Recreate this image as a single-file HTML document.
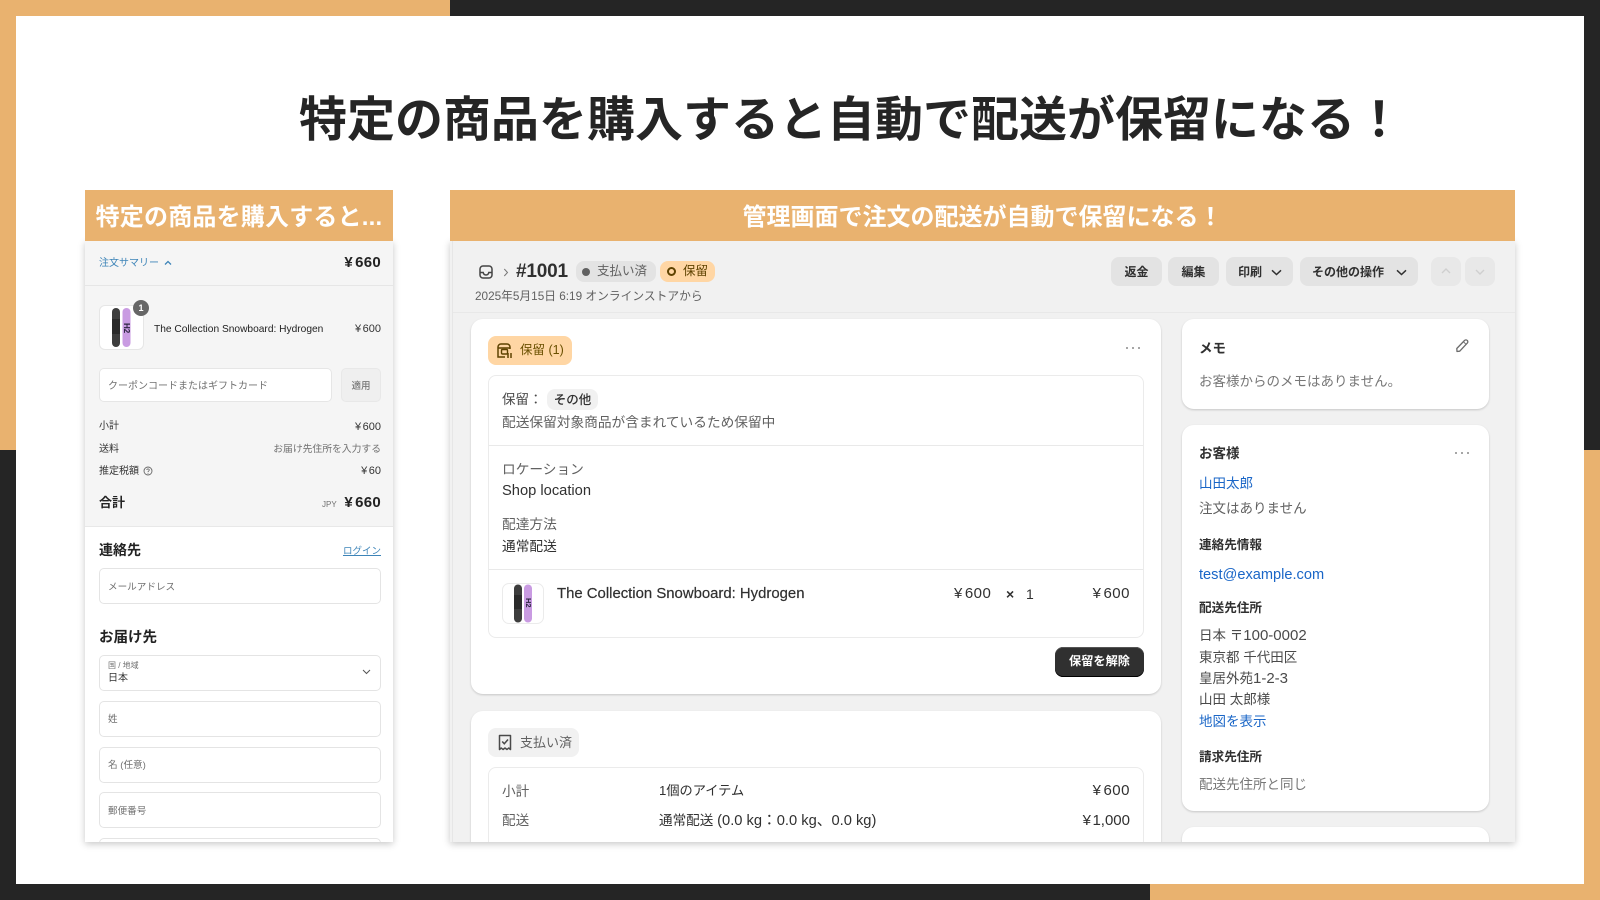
<!DOCTYPE html>
<html lang="ja"><head><meta charset="utf-8"><title>配送保留</title>
<style>
*{box-sizing:border-box;margin:0;padding:0}
html,body{width:1600px;height:900px;overflow:hidden;background:#fff}
body{position:relative;font-family:"Liberation Sans","Noto Sans CJK JP",sans-serif;color:#303030}
.a{position:absolute}
.t{position:absolute;white-space:nowrap;height:20px;line-height:20px;margin-top:1px}
.r{position:absolute;white-space:nowrap;height:20px;line-height:20px;text-align:right;margin-top:1px}
.b{font-weight:700}
.panel{position:absolute;overflow:hidden;box-shadow:0 2px 7px rgba(0,0,0,.22)}
.in{position:absolute;width:1600px;height:900px;filter:blur(.3px)}
.c{font-size:10px;color:#333}
.g{color:#707070}
.field{position:absolute;left:99px;width:282px;background:#fff;border:1px solid #e4e4e4;border-radius:5px}
.card{position:absolute;background:#fff;border-radius:12px;box-shadow:0 1px 2px rgba(0,0,0,.18)}
.box{position:absolute;background:#fff;border:1px solid #ebebeb;border-radius:8px}
.btn{position:absolute;top:257px;height:29px;background:#e3e3e3;border-radius:8px;font-size:12px;font-weight:700;color:#303030;line-height:31px;text-align:center;white-space:nowrap}
.m{font-size:13.5px;color:#303030}
.l{background:#e9e9e9;height:1px;position:absolute}
.lk{color:#1a66c7}
.y{margin-right:1.5px}
.y3{margin-right:2px}
.p{font-size:15px;letter-spacing:.5px}
.n{font-size:15px}
svg{position:absolute;overflow:visible}
</style></head><body>

<!-- frame -->
<div class="a" style="left:0;top:0;width:450px;height:16px;background:#e9b26f"></div>
<div class="a" style="left:450px;top:0;width:1150px;height:16px;background:#252525"></div>
<div class="a" style="left:0;top:0;width:16px;height:450px;background:#e9b26f"></div>
<div class="a" style="left:0;top:450px;width:16px;height:450px;background:#252525"></div>
<div class="a" style="left:1584px;top:0;width:16px;height:450px;background:#252525"></div>
<div class="a" style="left:1584px;top:450px;width:16px;height:450px;background:#e9b26f"></div>
<div class="a" style="left:0;top:884px;width:1150px;height:16px;background:#252525"></div>
<div class="a" style="left:1150px;top:884px;width:450px;height:16px;background:#e9b26f"></div>

<div class="a b" style="left:299px;top:86px;height:70px;line-height:70px;font-size:48px;color:#252525;white-space:nowrap">特定の商品を購入すると自動で配送が保留になる！</div>

<!-- checkout panel -->
<div class="panel" style="left:85px;top:241px;width:308px;height:601px;background:#fff">
<div class="in" style="left:-85px;top:-241px">
  <div class="a" style="left:85px;top:241px;width:308px;height:285px;background:#f5f5f5"></div>
  <div class="a" style="left:85px;top:285px;width:308px;height:1px;background:#e6e6e6"></div>
  <div class="a" style="left:85px;top:526px;width:308px;height:1px;background:#e8e8e8"></div>

  <div class="t" style="left:99px;top:253px;font-size:10px;color:#3d84b8">注文サマリー</div>
  <svg style="left:164px;top:260px" width="8" height="6" viewBox="0 0 8 6"><path d="M1 4.5L4 1.5L7 4.5" fill="none" stroke="#3d84b8" stroke-width="1.3"/></svg>
  <div class="r b" style="right:1219px;top:252px;font-size:15px;letter-spacing:.3px;color:#222"><span class="y3">¥</span>660</div>

  <div class="a" style="left:99px;top:305px;width:45px;height:45px;background:#fff;border:1px solid #e6e6e6;border-radius:6px"></div>
  <svg style="left:99px;top:305px" width="45" height="45" viewBox="0 0 45 45">
    <rect x="13" y="3" width="8" height="39" rx="4" fill="#3d3d3d"/>
    <rect x="13" y="14" width="8" height="15" fill="#2a2a2a"/>
    <rect x="23.5" y="3" width="8" height="39" rx="4" fill="#c99be2"/>
    <text x="0" y="0" transform="translate(25 18) rotate(90)" font-size="8" font-weight="700" fill="#2b2440" font-family="Liberation Sans">H2</text>
  </svg>
  <div class="a" style="left:133px;top:300px;width:16px;height:16px;border-radius:50%;background:#666;color:#fff;font-size:9px;font-weight:700;line-height:16px;text-align:center">1</div>
  <div class="t" style="left:154px;top:319px;font-size:10.2px;color:#222">The Collection Snowboard: Hydrogen</div>
  <div class="r" style="right:1219px;top:318px;font-size:11px;color:#333"><span class="y">¥</span>600</div>

  <div class="a" style="left:99px;top:368px;width:233px;height:34px;background:#fff;border:1px solid #e6e6e6;border-radius:5px"></div>
  <div class="t g" style="left:108px;top:376px;font-size:10px">クーポンコードまたはギフトカード</div>
  <div class="a" style="left:341px;top:368px;width:40px;height:34px;background:#efefef;border:1px solid #e8e8e8;border-radius:5px;font-size:9.5px;font-weight:500;color:#777;line-height:36px;text-align:center">適用</div>

  <div class="t c" style="left:99px;top:416px">小計</div>
  <div class="r c" style="right:1219px;top:416px;font-size:11px"><span class="y">¥</span>600</div>
  <div class="t c" style="left:99px;top:439px">送料</div>
  <div class="r g" style="right:1219px;top:439px;font-size:9.8px">お届け先住所を入力する</div>
  <div class="t c" style="left:99px;top:461px">推定税額</div>
  <svg style="left:143px;top:466px" width="10" height="10" viewBox="0 0 10 10"><circle cx="5" cy="5" r="4" fill="none" stroke="#666" stroke-width=".9"/><path d="M3.8 4C3.8 2.6 6.3 2.6 6.3 4C6.3 5 5 5 5 6" fill="none" stroke="#666" stroke-width=".8"/><circle cx="5" cy="7.3" r=".5" fill="#666"/></svg>
  <div class="r c" style="right:1219px;top:460px;font-size:11px"><span class="y">¥</span>60</div>
  <div class="t b" style="left:99px;top:492px;font-size:13px;color:#222">合計</div>
  <div class="t g" style="left:322px;top:494px;font-size:8px">JPY</div>
  <div class="r b" style="right:1219px;top:492px;font-size:15px;letter-spacing:.3px;color:#222"><span class="y3">¥</span>660</div>

  <div class="t b" style="left:99px;top:539px;font-size:14px;color:#222">連絡先</div>
  <div class="r" style="right:1219px;top:541px;font-size:9.5px;color:#3d84b8;text-decoration:underline">ログイン</div>
  <div class="field" style="top:568px;height:36px"></div>
  <div class="t g" style="left:108px;top:577px;font-size:9.6px">メールアドレス</div>

  <div class="t b" style="left:99px;top:627px;font-size:14.5px;color:#222">お届け先</div>
  <div class="field" style="top:655px;height:36px"></div>
  <div class="t g" style="left:108px;top:655px;font-size:8px">国 / 地域</div>
  <div class="t c" style="left:108px;top:668px">日本</div>
  <svg style="left:362px;top:669px" width="9" height="6" viewBox="0 0 9 6"><path d="M1 1L4.5 4.5L8 1" fill="none" stroke="#555" stroke-width="1"/></svg>
  <div class="field" style="top:701px;height:36px"></div>
  <div class="t g" style="left:108px;top:709px;font-size:9.6px">姓</div>
  <div class="field" style="top:747px;height:36px"></div>
  <div class="t g" style="left:108px;top:755px;font-size:9.6px">名 (任意)</div>
  <div class="field" style="top:792px;height:36px"></div>
  <div class="t g" style="left:108px;top:801px;font-size:9.6px">郵便番号</div>
  <div class="field" style="top:838px;height:20px"></div>
</div></div>
<div class="a" style="left:85px;top:190px;width:308px;height:51px;background:#e9b26f;color:#fff;font-size:24px;font-weight:700;line-height:55px;text-align:center;letter-spacing:.2px;white-space:nowrap">特定の商品を購入すると...</div>

<!-- admin panel -->
<div class="panel" style="left:450px;top:241px;width:1065px;height:601px;background:#f1f1f1">
<div class="in" style="left:-450px;top:-241px">
  <div class="a" style="left:452px;top:241px;width:1px;height:601px;background:#e6e6e6"></div>
  <div class="a" style="left:453px;top:312px;width:1062px;height:1px;background:#e8e8e8"></div>

  <svg style="left:479px;top:265px" width="14" height="14" viewBox="0 0 14 14"><rect x="1" y="1" width="12" height="12" rx="3" fill="none" stroke="#444" stroke-width="1.5"/><path d="M1 7.5H4.2C4.6 9.3 5.6 10 7 10C8.4 10 9.4 9.3 9.8 7.5H13" fill="none" stroke="#444" stroke-width="1.5"/></svg>
  <svg style="left:503px;top:268px" width="6" height="9" viewBox="0 0 6 9"><path d="M1.3 1L4.5 4.5L1.3 8" fill="none" stroke="#777" stroke-width="1"/></svg>
  <div class="t b" style="left:516px;top:261px;font-size:19px;letter-spacing:-.2px;color:#303030">#1001</div>
  <div class="a" style="left:576px;top:261px;width:80px;height:21px;background:#e3e3e3;border-radius:8px"></div>
  <div class="a" style="left:582px;top:268px;width:8px;height:8px;border-radius:50%;background:#616161"></div>
  <div class="t" style="left:597px;top:260px;font-size:12.5px;color:#616161">支払い済</div>
  <div class="a" style="left:660px;top:261px;width:55px;height:21px;background:#ffd6a4;border-radius:8px"></div>
  <div class="a" style="left:667px;top:267px;width:9px;height:9px;border-radius:50%;border:2px solid #5e4200"></div>
  <div class="t" style="left:683px;top:260px;font-size:12.5px;color:#5e4200">保留</div>
  <div class="t" style="left:475px;top:286px;font-size:11.75px;color:#616161">2025年5月15日 6:19 オンラインストアから</div>

  <div class="btn" style="left:1111px;width:51px">返金</div>
  <div class="btn" style="left:1168px;width:51px">編集</div>
  <div class="btn" style="left:1226px;width:67px;text-align:left;padding-left:12px">印刷</div>
  <svg style="left:1271px;top:269px" width="11" height="7" viewBox="0 0 11 7"><path d="M1 1.3L5.5 5.5L10 1.3" fill="none" stroke="#303030" stroke-width="1.5"/></svg>
  <div class="btn" style="left:1300px;width:118px;text-align:left;padding-left:12px">その他の操作</div>
  <svg style="left:1396px;top:269px" width="11" height="7" viewBox="0 0 11 7"><path d="M1 1.3L5.5 5.5L10 1.3" fill="none" stroke="#303030" stroke-width="1.5"/></svg>
  <div class="btn" style="left:1431px;width:30px;background:#e8e8e8"></div>
  <svg style="left:1441px;top:268px" width="10" height="6" viewBox="0 0 10 6"><path d="M1 5L5 1L9 5" fill="none" stroke="#cfcfcf" stroke-width="1.4"/></svg>
  <div class="btn" style="left:1465px;width:30px;background:#e8e8e8"></div>
  <svg style="left:1475px;top:269px" width="10" height="6" viewBox="0 0 10 6"><path d="M1 1L5 5L9 1" fill="none" stroke="#cfcfcf" stroke-width="1.4"/></svg>

  <!-- hold card -->
  <div class="card" style="left:471px;top:319px;width:690px;height:375px"></div>
  <div class="a" style="left:488px;top:336px;width:84px;height:29px;background:#ffd6a4;border-radius:8px"></div>
  <svg style="left:497px;top:342px" width="16" height="17" viewBox="0 0 16 17"><path d="M1 8V15H8M13 7V5A3 3 0 0 0 10 2H4A3 3 0 0 0 1 5V8M1 6H13" fill="none" stroke="#5e4200" stroke-width="1.5"/><rect x="4.5" y="7.5" width="6" height="4.5" rx="1" fill="none" stroke="#5e4200" stroke-width="1.4"/><path d="M11 11V16M14 11V16" stroke="#5e4200" stroke-width="1.5"/></svg>
  <div class="t" style="left:520px;top:339px;font-size:12.5px;color:#6b5000">保留 (1)</div>
  <svg style="left:1125px;top:346px" width="16" height="4" viewBox="0 0 16 4"><circle cx="2" cy="2" r="1" fill="#8a8a8a"/><circle cx="8" cy="2" r="1" fill="#8a8a8a"/><circle cx="14" cy="2" r="1" fill="#8a8a8a"/></svg>

  <div class="box" style="left:488px;top:375px;width:656px;height:263px"></div>
  <div class="t m" style="left:502px;top:389px;color:#4a4a4a">保留：</div>
  <div class="a" style="left:547px;top:389px;width:51px;height:21px;background:#f1f1f1;border-radius:8px;font-size:12.5px;font-weight:500;color:#303030;line-height:23px;text-align:center">その他</div>
  <div class="t" style="left:502px;top:412px;font-size:13.7px;color:#616161">配送保留対象商品が含まれているため保留中</div>
  <div class="l" style="left:489px;top:445px;width:654px"></div>
  <div class="t" style="left:502px;top:459px;font-size:13.7px;color:#616161">ロケーション</div>
  <div class="t m" style="left:502px;top:480px;font-size:14.7px">Shop location</div>
  <div class="t" style="left:502px;top:514px;font-size:13.7px;color:#616161">配達方法</div>
  <div class="t m" style="left:502px;top:536px;font-size:13.7px">通常配送</div>
  <div class="l" style="left:489px;top:569px;width:654px"></div>
  <div class="a" style="left:502px;top:583px;width:42px;height:41px;background:#fff;border:1px solid #ebebeb;border-radius:7px"></div>
  <svg style="left:502px;top:583px" width="42" height="41" viewBox="0 0 42 41">
    <rect x="12" y="1.5" width="8" height="38" rx="4" fill="#3d3d3d"/>
    <rect x="12" y="12" width="8" height="14" fill="#2a2a2a"/>
    <rect x="22" y="1.5" width="8" height="38" rx="4" fill="#c99be2"/>
    <text x="0" y="0" transform="translate(24 15) rotate(90)" font-size="7.5" font-weight="700" fill="#2b2440" font-family="Liberation Sans">H2</text>
  </svg>
  <div class="t" style="left:557px;top:583px;font-size:14.9px;color:#303030;-webkit-text-stroke:.2px #303030">The Collection Snowboard: Hydrogen</div>
  <div class="t m p" style="left:954px;top:583px"><span class="y3">¥</span>600</div>
  <div class="t m" style="left:1006px;top:583px;font-size:14px;font-weight:700">×</div>
  <div class="t m" style="left:1026px;top:583px;font-size:14px">1</div>
  <div class="r m p" style="right:470px;top:583px"><span class="y3">¥</span>600</div>
  <div class="a" style="left:1055px;top:647px;width:89px;height:30px;background:#303030;border-radius:8px;color:#fff;font-size:12.2px;font-weight:700;line-height:29px;text-align:center;box-shadow:inset 0 -1px 0 #000,inset 0 1px 0 #555">保留を解除</div>

  <!-- paid card -->
  <div class="card" style="left:471px;top:711px;width:690px;height:150px"></div>
  <div class="a" style="left:488px;top:728px;width:91px;height:29px;background:#f1f1f1;border-radius:8px"></div>
  <svg style="left:498px;top:734px" width="14" height="17" viewBox="0 0 14 17"><path d="M1.5 1.5H12.5V15.5L10.7 14L9 15.5L7 14L5 15.5L3.3 14L1.5 15.5Z" fill="none" stroke="#4a4a4a" stroke-width="1.5" stroke-linejoin="round"/><path d="M4.2 7.5L6.3 9.8L10 5.5" fill="none" stroke="#4a4a4a" stroke-width="1.5"/></svg>
  <div class="t" style="left:520px;top:732px;font-size:13px;color:#616161">支払い済</div>
  <div class="box" style="left:488px;top:767px;width:656px;height:90px"></div>
  <div class="t" style="left:502px;top:781px;font-size:13.6px;color:#616161">小計</div>
  <div class="t m" style="left:659px;top:780px;font-size:13.2px">1個のアイテム</div>
  <div class="r m p" style="right:470px;top:780px"><span class="y3">¥</span>600</div>
  <div class="t" style="left:502px;top:810px;font-size:13.6px;color:#616161">配送</div>
  <div class="t m" style="left:659px;top:810px;font-size:13.6px">通常配送 <span style="font-size:14.7px">(0.0 kg：0.0 kg、0.0 kg)</span></div>
  <div class="r m" style="right:470px;top:810px;font-size:15px"><span class="y">¥</span>1,000</div>

  <!-- memo card -->
  <div class="card" style="left:1182px;top:319px;width:307px;height:90px"></div>
  <div class="t b" style="left:1199px;top:338px;font-size:13.5px">メモ</div>
  <svg style="left:1454px;top:338px" width="16" height="16" viewBox="0 0 16 16"><path d="M3 13.5L2.8 10.5L10.5 2.5C11.3 1.7 12.6 1.7 13.3 2.5C14 3.2 14 4.4 13.3 5.1L5.7 13.2Z" fill="none" stroke="#6b6b6b" stroke-width="1.3" stroke-linejoin="round"/><path d="M9.5 3.8L12 6.3" stroke="#6b6b6b" stroke-width="1"/></svg>
  <div class="t" style="left:1199px;top:371px;font-size:13.5px;color:#777">お客様からのメモはありません。</div>

  <!-- customer card -->
  <div class="card" style="left:1182px;top:425px;width:307px;height:386px"></div>
  <div class="t b" style="left:1199px;top:443px;font-size:13.5px">お客様</div>
  <svg style="left:1454px;top:451px" width="16" height="4" viewBox="0 0 16 4"><circle cx="2" cy="2" r="1" fill="#8a8a8a"/><circle cx="8" cy="2" r="1" fill="#8a8a8a"/><circle cx="14" cy="2" r="1" fill="#8a8a8a"/></svg>
  <div class="t lk" style="left:1199px;top:473px;font-size:13.5px">山田太郎</div>
  <div class="t" style="left:1199px;top:498px;font-size:13.5px;color:#616161">注文はありません</div>
  <div class="t b" style="left:1199px;top:534px;font-size:12.6px">連絡先情報</div>
  <div class="t lk" style="left:1199px;top:564px;font-size:14.6px">test@example.com</div>
  <div class="t b" style="left:1199px;top:597px;font-size:12.6px">配送先住所</div>
  <div class="t m" style="left:1199px;top:625px;color:#4a4a4a">日本 〒<span class="n">100-0002</span></div>
  <div class="t m" style="left:1199px;top:647px;color:#4a4a4a">東京都 千代田区</div>
  <div class="t m" style="left:1199px;top:668px;color:#4a4a4a">皇居外苑<span class="n">1-2-3</span></div>
  <div class="t m" style="left:1199px;top:689px;color:#4a4a4a">山田 太郎様</div>
  <div class="t lk" style="left:1199px;top:711px;font-size:13.5px">地図を表示</div>
  <div class="t b" style="left:1199px;top:746px;font-size:12.6px">請求先住所</div>
  <div class="t" style="left:1199px;top:774px;font-size:13.5px;color:#777">配送先住所と同じ</div>

  <div class="card" style="left:1182px;top:827px;width:307px;height:30px"></div>
</div></div>
<div class="a" style="left:450px;top:190px;width:1065px;height:51px;background:#e9b26f;color:#fff;font-size:24px;font-weight:700;line-height:55px;text-align:center;white-space:nowrap">管理画面で注文の配送が自動で保留になる！</div>

</body></html>
